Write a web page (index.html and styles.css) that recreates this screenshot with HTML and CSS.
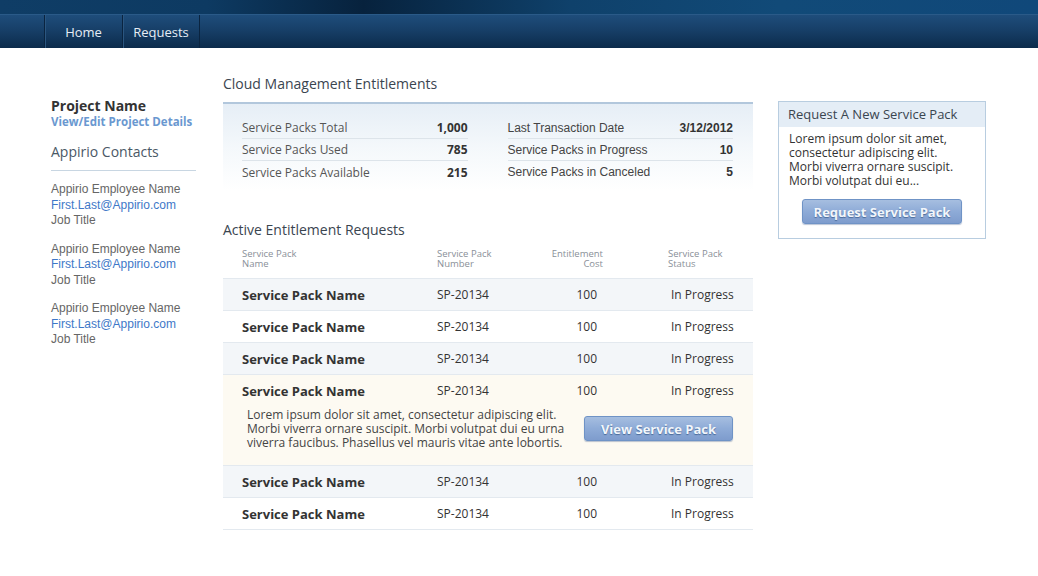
FILE: index.html
```html
<!DOCTYPE html>
<html>
<head>
<meta charset="utf-8">
<link rel="stylesheet" href="styles.css">
</head>
<body>
<header class="topbar">
  <div class="topband"></div>
  <nav class="nav">
    <a class="nav-item">Home</a>
    <a class="nav-item">Requests</a>
  </nav>
</header>
<main class="page">
  <aside class="sidebar">
    <div class="project-name">Project Name</div>
    <a class="project-link">View/Edit Project Details</a>
    <h3 class="contacts-title">Appirio Contacts</h3>
    <div class="contact">
      <div>Appirio Employee Name</div>
      <a>First.Last@Appirio.com</a>
      <div>Job Title</div>
    </div>
    <div class="contact">
      <div>Appirio Employee Name</div>
      <a>First.Last@Appirio.com</a>
      <div>Job Title</div>
    </div>
    <div class="contact">
      <div>Appirio Employee Name</div>
      <a>First.Last@Appirio.com</a>
      <div>Job Title</div>
    </div>
  </aside>
  <section class="center">
    <h2 class="section-title">Cloud Management Entitlements</h2>
    <div class="stats">
      <div class="stat-col">
        <div class="stat-row"><span>Service Packs Total</span><b>1,000</b></div>
        <div class="stat-row"><span>Service Packs Used</span><b>785</b></div>
        <div class="stat-row"><span>Service Packs Available</span><b>215</b></div>
      </div>
      <div class="stat-col arial">
        <div class="stat-row"><span>Last Transaction Date</span><b>3/12/2012</b></div>
        <div class="stat-row"><span>Service Packs in Progress</span><b>10</b></div>
        <div class="stat-row"><span>Service Packs in Canceled</span><b>5</b></div>
      </div>
    </div>
    <h2 class="section-title second">Active Entitlement Requests</h2>
    <div class="table">
      <div class="thead">
        <div>Service Pack<br>Name</div>
        <div>Service Pack<br>Number</div>
        <div class="right">Entitlement<br>Cost</div>
        <div class="status">Service Pack<br>Status</div>
      </div>
      <div class="row alt">
        <div class="name">Service Pack Name</div><div>SP-20134</div><div class="cost">100</div><div class="status">In Progress</div>
      </div>
      <div class="row">
        <div class="name">Service Pack Name</div><div>SP-20134</div><div class="cost">100</div><div class="status">In Progress</div>
      </div>
      <div class="row alt">
        <div class="name">Service Pack Name</div><div>SP-20134</div><div class="cost">100</div><div class="status">In Progress</div>
      </div>
      <div class="expanded">
        <div class="row">
          <div class="name">Service Pack Name</div><div>SP-20134</div><div class="cost">100</div><div class="status">In Progress</div>
        </div>
        <div class="detail">
          <p>Lorem ipsum dolor sit amet, consectetur adipiscing elit. Morbi viverra ornare suscipit. Morbi volutpat dui eu urna viverra faucibus. Phasellus vel mauris vitae ante lobortis.</p>
          <button class="btn view-btn">View Service Pack</button>
        </div>
      </div>
      <div class="row alt">
        <div class="name">Service Pack Name</div><div>SP-20134</div><div class="cost">100</div><div class="status">In Progress</div>
      </div>
      <div class="row">
        <div class="name">Service Pack Name</div><div>SP-20134</div><div class="cost">100</div><div class="status">In Progress</div>
      </div>
    </div>
  </section>
  <aside class="panel-wrap">
    <div class="panel">
      <div class="panel-head">Request A New Service Pack</div>
      <div class="panel-body">
        <p>Lorem ipsum dolor sit amet, consectetur adipiscing elit. Morbi viverra ornare suscipit. Morbi volutpat dui eu...</p>
        <button class="btn req-btn">Request Service Pack</button>
      </div>
    </div>
  </aside>
</main>
</body>
</html>
```
FILE: styles.css
```css
* { box-sizing: border-box; }
html, body { margin: 0; padding: 0; background: #fff; }
body { font-family: "Open Sans", "Liberation Sans", sans-serif; color: #333; }
a { text-decoration: none; }
p { margin: 0; }

.topbar { height: 48px; }
.topband {
  height: 14px;
  background: linear-gradient(90deg, #0f3d66 0%, #0d3a62 20%, #07223d 35%, #0f416b 55%, #114a78 75%, #10487a 100%);
}
.nav {
  height: 34px;
  display: flex;
  padding-left: 44px;
  background: linear-gradient(#1e4d7b 0%, #173f68 45%, #0c2b4b 100%);
  border-top: 1px solid #2a5a88;
}
.nav-item {
  width: 78px;
  display: flex;
  align-items: center;
  justify-content: center;
  color: #e6edf5;
  font-size: 13px;
  border-left: 1px solid #0a2440;
  box-shadow: inset 1px 0 0 #2b5680;
}
.nav-item:last-child { border-right: 1px solid #0a2440; }

.page {
  display: flex;
  padding: 26px 0 0 51px;
}

.sidebar { width: 145px; padding-top: 23px; }
.project-name { font-size: 14px; font-weight: 700; color: #333; line-height: 17px; }
.project-link {
  display: block;
  font-size: 11.5px;
  font-weight: 700;
  color: #6a98d0;
  line-height: 15px;
  white-space: nowrap;
}
.contacts-title {
  margin: 14px 0 0;
  font-size: 14px;
  font-weight: 400;
  color: #4a5866;
  line-height: 18px;
  padding-bottom: 9px;
  border-bottom: 1px solid #c8d6e2;
}
.contact {
  font-family: "Liberation Sans", Arial, sans-serif;
  font-size: 12px;
  line-height: 15.5px;
  color: #666;
  margin-top: 11px;
}
.contact + .contact { margin-top: 13px; }
.contact a { display: block; color: #3e78c8; }

.center { width: 530px; margin-left: 27px; }
.section-title {
  margin: 0;
  font-size: 14px;
  font-weight: 400;
  color: #3a4550;
  line-height: 20px;
}
.stats {
  margin-top: 8px;
  height: 89px;
  border-top: 2px solid #b2c7dc;
  background: linear-gradient(#e6eef6 0%, #f4f8fb 50%, #fff 100%);
  display: flex;
  gap: 40px;
  padding: 13px 20px 0 19px;
}
.stat-col { flex: 1; }
.stat-row {
  display: flex;
  justify-content: space-between;
  align-items: center;
  height: 22px;
  font-size: 12px;
  color: #555;
  border-bottom: 1px solid #dde4ea;
}
.stat-row:last-child { border-bottom: none; }
.stat-row b { color: #333; font-weight: 700; }
.arial .stat-row { font-family: "Liberation Sans", Arial, sans-serif; color: #444; }

.section-title.second { margin-top: 29px; }

.thead, .row {
  display: grid;
  grid-template-columns: 195px 111px 55px 1fr;
  padding: 0 20px 0 19px;
}
.thead {
  padding-top: 9px;
  height: 39px;
  font-size: 9.5px;
  line-height: 10px;
  color: #8a9098;
  border-bottom: 1px solid #e3e9ef;
}
.thead .right { text-align: right; }
.thead .status { padding-left: 65px; white-space: nowrap; }
.row {
  align-items: center;
  height: 32px;
  font-size: 12px;
  color: #333;
  border-bottom: 1px solid #e3e9ef;
  background: #fff;
}
.row.alt { background: #f3f6f9; }
.row .name { font-size: 13px; font-weight: 700; }
.row .cost { text-align: right; padding-right: 6px; }
.row .status { padding-left: 68px; white-space: nowrap; }

.expanded { background: #fdfaf2; border-bottom: 1px solid #e3e9ef; height: 91px; }
.expanded .row { background: transparent; border-bottom: none; height: 31px; }
.detail {
  display: flex;
  align-items: flex-start;
  justify-content: space-between;
  padding: 2px 20px 0 24px;
}
.detail p { width: 320px; font-size: 12px; line-height: 14px; color: #444; }
.btn {
  font-family: "Open Sans", sans-serif;
  font-size: 13px;
  font-weight: 700;
  color: #f2f6fb;
  text-shadow: 0 1px 1px #4a6a99;
  border: 1px solid #6f93c6;
  border-radius: 3px;
  background: linear-gradient(#a6bee0 0%, #8eabd7 50%, #7e9ccd 100%);
  box-shadow: 0 1px 1px rgba(60,90,140,0.35);
  height: 25px;
  padding: 0;
}
.view-btn { width: 149px; margin-top: 8px; }

.panel-wrap { margin-left: 25px; padding-top: 27px; }
.panel { width: 208px; border: 1px solid #b8cde0; }
.panel-head {
  height: 25px;
  background: #e4edf6;
  font-size: 13px;
  color: #3a4550;
  padding: 4px 0 0 9px;
  line-height: 17px;
}
.panel-body { padding: 5px 10px 14px 10px; text-align: center; }
.panel-body p { text-align: left; font-size: 12px; line-height: 14px; color: #333; padding-right: 12px; }
.req-btn { width: 160px; margin-top: 11px; }
```
